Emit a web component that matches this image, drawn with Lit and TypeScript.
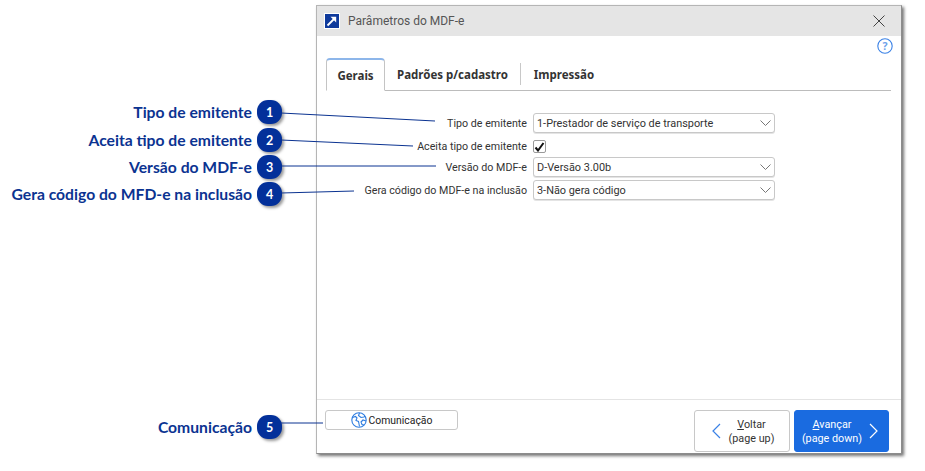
import { LitElement, html, css, svg } from "lit";
import { customElement } from "lit/decorators.js";

const callouts = [
  { n: 1, label: "Tipo de emitente", gap: 4 },
  { n: 2, label: "Aceita tipo de emitente", gap: 3 },
  { n: 3, label: "Versão do MDF-e", gap: 3 },
  { n: 4, label: "Gera código do MFD-e na inclusão", gap: 3 },
];

const lines = [
  [281, 113, 435, 121],
  [281, 140, 413, 146],
  [281, 166, 436, 166],
  [281, 193, 354, 191],
  [281, 423, 323, 423],
];

const chevron = html`<svg class="chev" width="11" height="6" viewBox="0 0 11 6"><path d="M.5.5l5 5 5-5" fill="none" stroke="#777" stroke-width="1"/></svg>`;

@customElement("app-root")
export class AppRoot extends LitElement {
  static styles = css`
    :host {
      display: flex;
      position: relative;
      width: 925px;
      height: 471px;
      background: #fff;
      overflow: hidden;
      font-family: Roboto, "Noto Sans", sans-serif;
      color: #222;
    }
    .wires { position: absolute; left: 0; top: 0; pointer-events: none; z-index: 2; }

    .callouts { width: 282px; margin-right: 34px; flex: none; display: flex; flex-direction: column; padding-top: 100px; box-sizing: border-box; }
    .callout { display: flex; align-items: center; justify-content: flex-end; gap: 5px; height: 24px; }
    .callout.last { margin-top: 206px; }
    .callout span {
      font-family: Lato, "Open Sans", sans-serif; font-weight: 700; font-size: 15.7px; color: #0b3391; white-space: nowrap;
    }
    .badge {
      width: 25px; height: 24px; flex: none; border-radius: 11px; background: #03309a; color: #fff;
      display: flex; align-items: center; justify-content: center;
      font-family: Lato, sans-serif; font-weight: 700; font-size: 12.5px;
      box-shadow: 2px 2px 3px rgba(0,0,0,.4);
    }

    .dialog {
      margin-top: 5px; width: 586px; height: 449px; flex: none; box-sizing: border-box;
      background: #fff; border: 1px solid #b5b5b5; border-right-color: #8c8c8c; border-bottom-color: #8c8c8c;
      box-shadow: 2px 2px 3px rgba(0,0,0,.55);
      display: flex; flex-direction: column;
    }
    .title { height: 30px; flex: none; background: #e5e5e5; display: flex; align-items: center; padding: 0 16px 0 7px; gap: 8px; font-size: 12px; color: #555; }
    .title .name { flex: 1; }
    .content { flex: 1; display: flex; flex-direction: column; position: relative; padding: 0 10px 0 9px; }
    .help { align-self: flex-end; margin: 2px -2px 0 0; display: block; }
    .tabs { display: flex; align-items: flex-end; height: 36px; border-bottom: 1px solid #bcbcbc; font-family: "Noto Sans", sans-serif; }
    .tab { font-weight: 700; font-size: 11.5px; color: #333; display: flex; align-items: center; justify-content: center; box-sizing: border-box; }
    .tab.active {
      width: 59px; border: 1px solid #c4c4c4; border-bottom: 1px solid #fff; border-top: 2px solid #8db6ea; border-radius: 4px 4px 0 0; margin-bottom: -1px; height: 33px;
    }
    .tab.t2 { width: 136px; border-right: 1px solid #c8c8c8; height: 22px; margin-bottom: 5px; }
    .tab.t3 { width: 86px; margin-bottom: 5px; height: 22px; }

    .form { display: grid; grid-template-columns: 201px 242px; column-gap: 6px; margin-top: 22px; align-items: center; }
    .form label { text-align: right; font-size: 10.7px; line-height: 13px; color: #333; white-space: nowrap; justify-self: end; }
    .select {
      height: 20px; box-sizing: border-box; border: 1px solid #c8c8c8; border-radius: 3px; display: flex; align-items: center; justify-content: space-between;
      padding: 0 3px 0 3px; font-size: 10.9px; color: #333; background: #fff; box-shadow: 0 1px 0 #e4e4e4;
    }
    .row1 { margin-bottom: 7px; }
    .row2 { margin-bottom: 4px; }
    .row3 { margin-bottom: 3px; }
    .chk { width: 13px; height: 13px; box-sizing: border-box; border: 1px solid #9a9a9a; border-radius: 2px; display: flex; align-items: center; justify-content: center; }

    .footer { margin-top: auto; border-top: 1px solid #e4e4e4; margin-left: -9px; margin-right: -10px; height: 54px; flex: none; padding: 10px 12px 0 8px; box-sizing: border-box; display: flex; align-items: flex-start; }
    .btn { box-sizing: border-box; border: 1px solid #c8c8c8; border-radius: 3px; background: #fff; color: #333; font-size: 10.8px; }
    .com { width: 133px; height: 20px; display: flex; align-items: center; justify-content: center; gap: 2px; color: #222; font-size: 10.4px; }
    .spacer { flex: 1; }
    .nav { height: 42px; width: 96px; display: flex; align-items: center; line-height: 14px; text-align: center; }
    .nav .txt { flex: 1; padding-top: 2px; }
    .prev { padding: 0 7px 0 17px; margin-right: 4px; }
    .next { width: 95px; background: #1a6be0; border-color: #1a6be0; color: #fff; padding: 0 10px 0 0; }
  `;

  render() {
    return html`
      <div class="callouts">
        ${callouts.map(
          (c) => html`<div class="callout" style="margin-bottom:${c.gap}px"><span>${c.label}</span><div class="badge">${c.n}</div></div>`
        )}
        <div class="callout last"><span>Comunicação</span><div class="badge">5</div></div>
      </div>

      <div class="dialog">
        <div class="title">
          <svg width="16" height="16" viewBox="0 0 16 16">
            <rect x=".5" y=".5" width="15" height="15" fill="#0f3a9c" stroke="#fff" />
            <path d="M3.5 12.5L10 6" fill="none" stroke="#fff" stroke-width="1.8" />
            <path d="M6.5 3.8h5.7v5.7z" fill="#fff" />
          </svg>
          <span class="name">Parâmetros do MDF-e</span>
          <svg width="12" height="12" viewBox="0 0 12 12"><path d="M.5.5l11 11M11.5.5l-11 11" stroke="#444" stroke-width="1" fill="none" /></svg>
        </div>
        <div class="content">
          <svg class="help" width="16" height="16" viewBox="0 0 16 16">
            <circle cx="8" cy="8" r="7.2" fill="none" stroke="#3b82e6" stroke-width="1.1" />
            <text x="8" y="11.8" text-anchor="middle" font-size="10.5" font-weight="700" font-family="Noto Sans" fill="#6ea2ea">?</text>
          </svg>
          <div class="tabs">
            <div class="tab active">Gerais</div>
            <div class="tab t2">Padrões p/cadastro</div>
            <div class="tab t3">Impressão</div>
          </div>
          <div class="form">
            <label class="row1">Tipo de emitente</label>
            <div class="select row1">1-Prestador de serviço de transporte ${chevron}</div>
            <label class="row2">Aceita tipo de emitente</label>
            <div class="chk row2">
              <svg width="11" height="10" viewBox="0 0 11 10"><path d="M1.5 5.5l2.5 3 5.5-7.5" fill="none" stroke="#111" stroke-width="2" /></svg>
            </div>
            <label class="row3">Versão do MDF-e</label>
            <div class="select row3">D-Versão 3.00b ${chevron}</div>
            <label>Gera código do MDF-e na inclusão</label>
            <div class="select">3-Não gera código ${chevron}</div>
          </div>
          <div class="footer">
            <div class="btn com">
              <svg width="16" height="16" viewBox="0 0 16 16" fill="none" stroke="#2f7de0" stroke-width="1.1">
                <circle cx="8" cy="8" r="7.2" />
                <path d="M1.5 5.5l3-1 1.5 1.5-1 2.5 2.5 1 1 5M8.5 1l-1 2.5 2.5 2 3-.5 1-1M15 9l-3-1-2 2 1 2.5 2 .5" />
              </svg>
              Comunicação
            </div>
            <div class="spacer"></div>
            <div class="btn nav prev">
              <svg width="9" height="16" viewBox="0 0 9 16"><path d="M8 1L1 8l7 7" fill="none" stroke="#3b82e6" stroke-width="1.2" /></svg>
              <div class="txt"><u>V</u>oltar<br />(page up)</div>
            </div>
            <div class="btn nav next">
              <div class="txt"><u>A</u>vançar<br />(page down)</div>
              <svg width="9" height="16" viewBox="0 0 9 16"><path d="M1 1l7 7-7 7" fill="none" stroke="#fff" stroke-width="1.2" /></svg>
            </div>
          </div>
        </div>
      </div>

      <svg class="wires" width="925" height="471">
        ${lines.map((l) => svg`<line x1=${l[0]} y1=${l[1]} x2=${l[2]} y2=${l[3]} stroke="#0b3391" stroke-width="1" />`)}
      </svg>
    `;
  }
}
